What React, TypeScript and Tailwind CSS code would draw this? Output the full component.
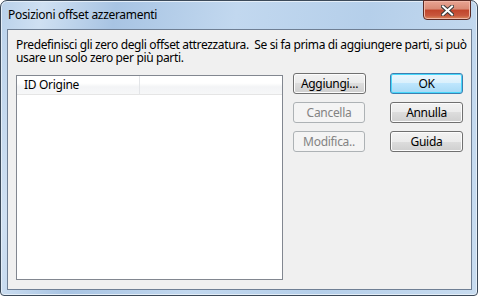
import React from 'react';

const font = { fontFamily: '"Segoe UI", "Noto Sans", "Liberation Sans", sans-serif' };

function WinButton({ label, disabled, primary }: { label: string; disabled?: boolean; primary?: boolean }) {
  if (disabled) {
    return (
      <div className="w-[72px] h-[21px] rounded-[3px] border border-[#adb2b5] bg-[#f4f4f4] flex items-center justify-center text-[12px] text-[#838383]">
        {label}
      </div>
    );
  }
  return (
    <div
      className={`w-[73px] h-[21px] rounded-[3px] border flex items-center justify-center text-[12px] text-black ${
        primary
          ? 'border-[#3c7fb1] shadow-[inset_0_0_0_1px_#48d8fb] bg-[linear-gradient(#eaf6fd_0%,#d9f0fc_50%,#bee6fd_50%,#a7d9f5_100%)]'
          : 'border-[#707070] shadow-[inset_0_0_0_1px_#fcfcfc] bg-[linear-gradient(#f2f2f2_0%,#ebebeb_50%,#dddddd_50%,#cfcfcf_100%)]'
      }`}
    >
      {label}
    </div>
  );
}

export default function App() {
  return (
    <div className="w-[478px] h-[296px] bg-white tracking-[-0.3px]" style={font}>
      <div className="w-[478px] h-[296px] rounded-t-[7px] rounded-b-[4px] border border-[#3c4a5a] bg-[linear-gradient(100deg,#b9d1ea_0%,#cfe0f2_8%,#a8c4e3_22%,#c2d8ef_45%,#b5cfea_70%,#c8dcf0_100%)] flex flex-col pl-[6px] pr-[5px] pb-[5px] shadow-[inset_0_0_0_1px_#e4eef8]">
        {/* Title bar */}
        <div className="h-[28px] flex items-start justify-between">
          <span className="pt-[5px] pl-[1px] text-[12px] text-black">Posizioni offset azzeramenti</span>
          <div className="mt-[-1px] mr-[1px] w-[48px] h-[20px] rounded-b-[4px] border border-[#5b2a24] bg-[linear-gradient(#e8a493_0%,#d98a75_45%,#c0442b_50%,#c8563d_80%,#d98c5f_100%)] flex items-center justify-center shadow-[inset_0_0_0_1px_#f0b6a6]">
            <svg width="13" height="11" viewBox="0 0 13 11">
              <path d="M2 1.5 L11 9.5 M11 1.5 L2 9.5" stroke="#3a3a3a" strokeWidth="4" strokeLinecap="square" />
              <path d="M2 1.5 L11 9.5 M11 1.5 L2 9.5" stroke="#ffffff" strokeWidth="2" strokeLinecap="square" />
            </svg>
          </div>
        </div>

        {/* Client area */}
        <div className="flex-1 border border-[#6f7f94] bg-[#f0f0f0] pl-[8px] pt-[8px] flex flex-col">
          <p className="text-[12px] leading-[13px] text-black whitespace-nowrap tracking-[-0.36px]">
            Predefinisci gli zero degli offset attrezzatura.&nbsp; Se si fa prima di aggiungere parti, si può
            <br />
            usare un solo zero per più parti.
          </p>
          <div className="flex mt-[9px]">
            <div className="w-[267px] h-[205px] mt-[2px] border border-[#828790] bg-white flex flex-col">
              <div className="h-[19px] flex border-b border-[#e5e5e5] bg-[linear-gradient(#ffffff_0%,#ffffff_40%,#f3f4f6_60%,#f6f7f8_100%)]">
                <div className="w-[123px] border-r border-[#e3e5e8] pl-[7px] flex items-center text-[12px] text-black">ID Origine</div>
              </div>
            </div>
            <div className="ml-[10px] flex flex-col gap-[8px]">
              <WinButton label="Aggiungi..." />
              <WinButton label="Cancella" disabled />
              <WinButton label="Modifica.." disabled />
            </div>
            <div className="ml-[24px] flex flex-col gap-[8px]">
              <WinButton label="OK" primary />
              <WinButton label="Annulla" />
              <WinButton label="Guida" />
            </div>
          </div>
        </div>
      </div>
    </div>
  );
}
